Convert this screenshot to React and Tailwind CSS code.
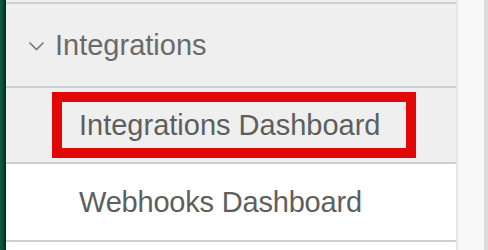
export default function App() {
  return (
    <div
      className="flex w-[488px] h-[250px] overflow-hidden bg-white"
      style={{ fontFamily: '"Liberation Sans", Arial, sans-serif' }}
    >
      <div className="w-[6px] h-full bg-gradient-to-r from-[#0e5c42] via-[#0a4c36] to-[#03261a]" />
      <div className="flex flex-col w-[450px] h-full">
        <div className="h-[2px] bg-[#efefef]" />
        <div className="h-[2px] bg-[#c9d0da]" />
        <div className="h-[82px] bg-[#efefef] flex items-center pl-[22px] text-[#6a6a6a]">
          <svg width="17" height="10" viewBox="0 0 17 10" className="mr-[10px] mt-[1px]">
            <path d="M1.5 1.5 L8.5 8.5 L15.5 1.5" fill="none" stroke="#7a7a7a" strokeWidth="1.6" />
          </svg>
          <span className="text-[29px] leading-none">Integrations</span>
        </div>
        <div className="h-[2px] bg-[#c9d0da]" />
        <div className="h-[74px] bg-[#efefef] flex items-center pl-[46px]">
          <div className="w-[364px] h-[66px] border-[10px] border-[#e30606] flex items-center pl-[17px]">
            <span className="text-[29px] leading-none text-[#5e5e5e]">Integrations Dashboard</span>
          </div>
        </div>
        <div className="h-[2px] bg-[#c9d0da]" />
        <div className="h-[76px] bg-white flex items-center pl-[73px]">
          <span className="text-[29px] leading-none tracking-[-0.2px] text-[#5e5e5e]">Webhooks Dashboard</span>
        </div>
        <div className="h-[2px] bg-[#c9d0da]" />
        <div className="flex-1 bg-white" />
      </div>
      <div className="w-[2px] h-full bg-[#e6e6e6]" />
      <div className="w-[26px] h-full bg-[#f8f8f8]" />
      <div className="w-[4px] h-full bg-[#dcdcdc]" />
    </div>
  );
}
